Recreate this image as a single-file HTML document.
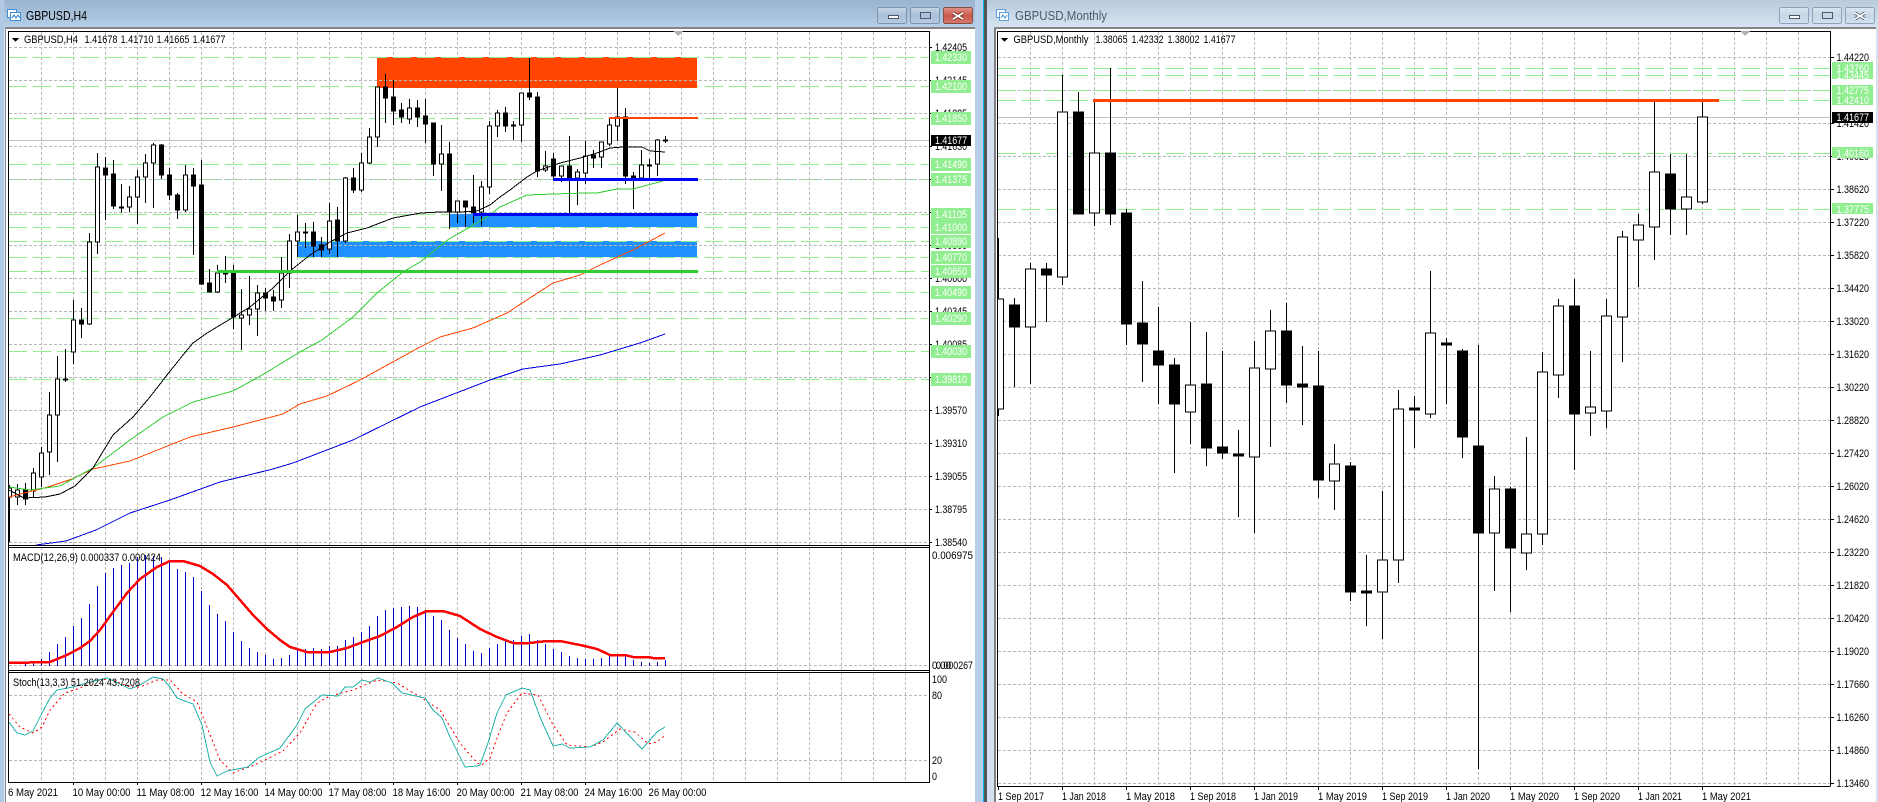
<!DOCTYPE html>
<html><head><meta charset="utf-8"><title>GBPUSD</title>
<style>
html,body{margin:0;padding:0;background:#fff;width:1878px;height:802px;overflow:hidden}
svg{display:block;shape-rendering:crispEdges}
text{font-family:"Liberation Sans",sans-serif;font-size:11px;fill:#000}
.w{fill:#fff}
</style></head><body>
<svg xmlns="http://www.w3.org/2000/svg" width="1878" height="802" viewBox="0 0 1878 802">
<defs>
<linearGradient id="tl" x1="0" y1="0" x2="0" y2="1"><stop offset="0" stop-color="#9ab3ce"/><stop offset="1" stop-color="#b6cfe7"/></linearGradient>
<linearGradient id="tr" x1="0" y1="0" x2="0" y2="1"><stop offset="0" stop-color="#b9cadb"/><stop offset="1" stop-color="#d6e4f2"/></linearGradient>
<linearGradient id="bl" x1="0" y1="0" x2="0" y2="1"><stop offset="0" stop-color="#c6d6e6"/><stop offset=".5" stop-color="#a9c0d8"/><stop offset="1" stop-color="#b9cde2"/></linearGradient>
<linearGradient id="br" x1="0" y1="0" x2="0" y2="1"><stop offset="0" stop-color="#dbe6f1"/><stop offset=".5" stop-color="#c6d6e6"/><stop offset="1" stop-color="#d3e1f0"/></linearGradient>
<linearGradient id="bc" x1="0" y1="0" x2="0" y2="1"><stop offset="0" stop-color="#e2958a"/><stop offset=".5" stop-color="#c9584b"/><stop offset="1" stop-color="#d27a6c"/></linearGradient>
<clipPath id="c1"><rect x="9" y="32" width="920" height="513"/></clipPath>
<clipPath id="c2"><rect x="998" y="32" width="832" height="754"/></clipPath>
</defs>
<rect width="1878" height="802" fill="#fff"/>
<!-- window chrome -->
<rect x="0" y="0" width="984" height="27" fill="url(#tl)"/>
<rect x="0" y="0" width="4.5" height="802" fill="#b2c9e6"/>
<rect x="5" y="27" width="1" height="775" fill="#8a8a8a"/>
<rect x="5" y="27" width="970" height="2" fill="#858585"/>
<rect x="975" y="0" width="8" height="802" fill="#b8cfe8"/>
<rect x="983" y="0" width="1" height="802" fill="#00b4f0"/>
<rect x="984" y="0" width="3" height="802" fill="#555"/>
<rect x="987" y="0" width="891" height="27" fill="url(#tr)"/>
<rect x="987" y="27" width="7" height="775" fill="#d3e1f0"/>
<rect x="994" y="27" width="2" height="775" fill="#808080"/>
<rect x="994" y="27" width="882" height="2" fill="#858585"/>
<rect x="1876" y="27" width="2" height="775" fill="#d3e1f0"/>
<!-- title icons and text -->
<g fill="#fff" stroke="#3f8fd8"><rect x="7.5" y="9.5" width="9" height="8"/><rect x="10.5" y="12.5" width="10" height="8"/></g>
<path d="M12 18l2-3 2 3 2-3 2 3" fill="none" stroke="#3f8fd8"/>
<text x="26" y="20" style="font-size:12.5px" textLength="61" lengthAdjust="spacingAndGlyphs">GBPUSD,H4</text>
<g fill="#fff" stroke="#5a9fdc"><rect x="996.5" y="9.5" width="9" height="8"/><rect x="999.5" y="12.5" width="9" height="8"/></g>
<path d="M1001 18l2-3 2 3 2-3" fill="none" stroke="#5a9fdc"/>
<text x="1015" y="20" style="font-size:12.5px;fill:#4d5a68" textLength="92" lengthAdjust="spacingAndGlyphs">GBPUSD,Monthly</text>
<!-- window buttons left -->
<g stroke="#7c93ad"><rect x="877.5" y="7.5" width="29" height="16" rx="2" fill="url(#bl)"/><rect x="910.5" y="7.5" width="29" height="16" rx="2" fill="url(#bl)"/><rect x="943.5" y="7.5" width="29" height="16" rx="2" fill="url(#bc)" stroke="#8a4a44"/></g>
<g fill="#fff" stroke="#4a5a6c"><rect x="888.5" y="15.5" width="10" height="3"/><rect x="920.5" y="12.5" width="10" height="6" fill="none"/></g>
<path d="M953 13l10 6M963 13l-10 6" stroke="#6a2a24" stroke-width="3.4" fill="none"/><path d="M953 13l10 6M963 13l-10 6" stroke="#fff" stroke-width="1.8" fill="none"/>
<!-- window buttons right -->
<g stroke="#8da2b9"><rect x="1779.5" y="7.5" width="29" height="16" rx="2" fill="url(#br)"/><rect x="1812.5" y="7.5" width="29" height="16" rx="2" fill="url(#br)"/><rect x="1845.5" y="7.5" width="29" height="16" rx="2" fill="url(#br)"/></g>
<g fill="#fff" stroke="#4a5a6c"><rect x="1789.5" y="15.5" width="10" height="3"/><rect x="1822.5" y="12.5" width="10" height="6" fill="none"/></g>
<path d="M1855 13l10 6M1865 13l-10 6" stroke="#5a6a7c" stroke-width="3.4" fill="none"/><path d="M1855 13l10 6M1865 13l-10 6" stroke="#fff" stroke-width="1.6" fill="none"/>

<!-- LEFT CHART -->
<path fill="none" stroke="#b8b8b8" stroke-dasharray="3 2" d="M41.5 32V782M73.5 32V782M105.5 32V782M137.5 32V782M169.5 32V782M201.5 32V782M233.5 32V782M265.5 32V782M297.5 32V782M329.5 32V782M361.5 32V782M393.5 32V782M425.5 32V782M457.5 32V782M489.5 32V782M521.5 32V782M553.5 32V782M585.5 32V782M617.5 32V782M649.5 32V782M681.5 32V782M713.5 32V782M745.5 32V782M777.5 32V782M809.5 32V782M841.5 32V782M873.5 32V782M905.5 32V782"/>
<path fill="none" stroke="#90ee90" stroke-dasharray="18 6" d="M9 57.5H929M9 86.5H929M9 118.5H929M9 164.5H929M9 179.5H929M9 214.5H929M9 227.5H929M9 241.5H929M9 257.5H929M9 271.5H929M9 292.5H929M9 318.5H929M9 351.5H929M9 379.5H929"/>
<g clip-path="url(#c1)">
<rect x="377" y="57" width="320" height="31" fill="#ff4500"/>
<rect x="449" y="214" width="248" height="13" fill="#1e90ff"/>
<rect x="297" y="241" width="400" height="16" fill="#1e90ff"/>
<path fill="none" stroke="#90ee90" stroke-dasharray="18 6" d="M369 57.5H697M297 241.5H697"/>
<path fill="none" stroke="#b8b8b8" stroke-dasharray="3 2" d="M9 47.5H929M9 80.5H929M9 113.5H929M9 146.5H929M9 179.5H929M9 212.5H929M9 245.5H929M9 278.5H929M9 311.5H929M9 344.5H929M9 377.5H929M9 410.5H929M9 443.5H929M9 476.5H929M9 509.5H929M9 542.5H929"/>
<path d="M9 140.5H929" stroke="#c0c0c0" fill="none"/>
<!-- wicks -->
<path fill="none" stroke="#000" d="M9.5 485V542M17.5 484V505M25.5 483V505M33.5 468V497M41.5 447V487M49.5 392V475M57.5 356V462M65.5 349V382M73.5 300V364M81.5 308V338M89.5 233V325M97.5 153V254M105.5 157V220M113.5 160V209M121.5 184V213M129.5 186V212M137.5 170V224M145.5 154V203M153.5 143V208M161.5 144V179M169.5 168V200M177.5 193V219M185.5 165V212M193.5 168V255M201.5 160V285M209.5 269V292M217.5 265V293M225.5 256V283M233.5 265V329M241.5 289V350M249.5 276V325M257.5 285V336M265.5 288V311M273.5 290V311M281.5 257V308M289.5 234V288M297.5 215V257M305.5 223V248M313.5 222V257M321.5 237V257M329.5 203V254M337.5 207V257M345.5 177V243M353.5 168V193M361.5 153V192M369.5 128V164M377.5 87V147M385.5 74V123M393.5 80V125M401.5 103V123M409.5 99V124M417.5 100V127M425.5 99V143M433.5 123V176M441.5 125V191M449.5 142V229M457.5 201V223M465.5 201V227M473.5 175V223M481.5 181V226M489.5 121V194M497.5 110V137M505.5 107V132M513.5 121V140M521.5 93V142M529.5 58V100M537.5 92V177M545.5 151V172M553.5 153V179M561.5 166V182M569.5 136V213M577.5 169V205M585.5 141V184M593.5 150V168M601.5 142V168M609.5 118V146M617.5 88V141M625.5 108V184M633.5 172V209M641.5 150V178M649.5 159V179M657.5 139V176M665.5 136V143"/>
<!-- white bodies -->
<path fill="#fff" stroke="#000" d="M7.5 488h4v9h-4zM15.5 490h4v7h-4zM31.5 473h4v18h-4zM39.5 453h4v24h-4zM47.5 415h4v37h-4zM55.5 379h4v36h-4zM71.5 320h4v32h-4zM87.5 242h4v82h-4zM95.5 167h4v75h-4zM127.5 197h4v10h-4zM135.5 177h4v20h-4zM143.5 163h4v14h-4zM151.5 145h4v18h-4zM183.5 175h4v35h-4zM215.5 273h4v19h-4zM239.5 315h4v3h-4zM247.5 309h4v6h-4zM255.5 293h4v16h-4zM279.5 273h4v27h-4zM287.5 241h4v32h-4zM295.5 232h4v9h-4zM327.5 221h4v28h-4zM343.5 178h4v63h-4zM359.5 163h4v27h-4zM367.5 137h4v26h-4zM375.5 87h4v50h-4zM407.5 108h4v11h-4zM439.5 154h4v10h-4zM455.5 201h4v11h-4zM479.5 187h4v25h-4zM487.5 126h4v61h-4zM495.5 113h4v13h-4zM519.5 93h4v32h-4zM543.5 166h4v4h-4zM559.5 166h4v10h-4zM575.5 172h4v6h-4zM583.5 156h4v17h-4zM599.5 142h4v15h-4zM607.5 125h4v19h-4zM615.5 117h4v9h-4zM639.5 165h4v13h-4zM655.5 140h4v24h-4z"/>
<!-- black bodies -->
<path fill="#000" stroke="#000" d="M23.5 490h4v9h-4zM63.5 379h4v1h-4zM79.5 320h4v4h-4zM103.5 168h4v7h-4zM111.5 174h4v32h-4zM119.5 207h4v1h-4zM159.5 145h4v30h-4zM167.5 175h4v20h-4zM175.5 195h4v15h-4zM191.5 175h4v11h-4zM199.5 185h4v99h-4zM207.5 283h4v9h-4zM223.5 273h4v1h-4zM231.5 273h4v44h-4zM263.5 293h4v5h-4zM271.5 297h4v4h-4zM303.5 232h4v1h-4zM311.5 232h4v14h-4zM319.5 245h4v5h-4zM335.5 220h4v21h-4zM351.5 178h4v12h-4zM383.5 87h4v11h-4zM391.5 97h4v14h-4zM399.5 110h4v7h-4zM415.5 108h4v9h-4zM423.5 116h4v8h-4zM431.5 123h4v41h-4zM447.5 154h4v58h-4zM463.5 201h4v6h-4zM471.5 207h4v6h-4zM503.5 113h4v13h-4zM511.5 125h4v1h-4zM527.5 93h4v4h-4zM535.5 97h4v74h-4zM551.5 159h4v17h-4zM567.5 166h4v12h-4zM591.5 155h4v3h-4zM623.5 117h4v59h-4zM631.5 176h4v2h-4zM647.5 165h4v1h-4zM663.5 140h4v1h-4z"/>
<!-- moving averages -->
<polyline fill="none" stroke="#0000e0" points="36,545 66,541 96,530 130,513 170,500 220,482 273,469 293,463 353,440 420,407 490,380 523,369 560,364 600,355 640,343 665,334"/>
<polyline fill="none" stroke="#ff4500" points="9,497 48,487 72,479 93,469 130,461 190,437 233,427 283,414 300,404 327,396 360,380 420,347 440,337 473,328 507,313 533,296 553,283 580,275 600,265 633,250 665,233"/>
<polyline fill="none" stroke="#32cd32" points="9,487 30,490 60,486 93,468 130,440 163,417 193,402 233,391 257,378 300,352 322,340 353,317 377,293 403,272 420,262 449,239 465,230 487,217 500,207 527,195 553,194 587,193 597,193 617,189 633,189 663,181"/>
<polyline fill="none" stroke="#000" points="9,490 24,498 45,497 60,494 75,486 93,468 113,435 133,417 150,397 167,375 183,355 193,343 207,333 227,321 250,307 273,288 290,271 310,255 330,242 347,233 367,228 393,218 421,213 440,212 460,212 477,211 490,205 500,197 510,190 527,177 537,171 560,163 580,158 597,153 610,148 623,147 642,147 650,151 665,152"/>
<!-- object lines -->
<rect x="473" y="213" width="225" height="3" fill="#0000ff"/>
<rect x="553" y="178" width="145" height="3" fill="#0000ff"/>
<rect x="217" y="270" width="481" height="3" fill="#32cd32"/>
<rect x="609" y="117" width="89" height="2" fill="#ff4500"/>
</g>
<!-- MACD -->
<path fill="none" stroke="#b8b8b8" stroke-dasharray="3 2" d="M9 665.5H929M9 695.5H929M9 760.5H929"/>
<path fill="none" stroke="#0000d0" d="M25.5 666V664M33.5 666V662M41.5 666V659M49.5 666V652M57.5 666V644M65.5 666V637M73.5 666V626M81.5 666V618M89.5 666V604M97.5 666V586M105.5 666V573M113.5 666V568M121.5 666V565M129.5 666V563M137.5 666V557M145.5 666V555M153.5 666V556M161.5 666V557M169.5 666V562M177.5 666V569M185.5 666V572M193.5 666V577M201.5 666V591M209.5 666V605M217.5 666V614M225.5 666V621M233.5 666V632M241.5 666V641M249.5 666V648M257.5 666V652M265.5 666V655M273.5 666V659M281.5 666V658M289.5 666V655M297.5 666V650M305.5 666V649M313.5 666V648M321.5 666V649M329.5 666V646M337.5 666V646M345.5 666V640M353.5 666V637M361.5 666V632M369.5 666V626M377.5 666V616M385.5 666V610M393.5 666V608M401.5 666V607M409.5 666V606M417.5 666V607M425.5 666V610M433.5 666V616M441.5 666V620M449.5 666V630M457.5 666V638M465.5 666V644M473.5 666V651M481.5 666V653M489.5 666V648M497.5 666V644M505.5 666V641M513.5 666V640M521.5 666V636M529.5 666V634M537.5 666V640M545.5 666V644M553.5 666V649M561.5 666V652M569.5 666V656M577.5 666V658M585.5 666V659M593.5 666V659M601.5 666V658M609.5 666V655M617.5 666V655M625.5 666V656M633.5 666V660M641.5 666V662M649.5 666V663M657.5 666V662M665.5 666V660"/>
<polyline fill="none" stroke="#ff0000" stroke-width="2.5" points="9,663 50,662 67,655 80,648 90,641 100,630 113,612 127,593 140,579 157,567 170,561 183,561 200,566 213,574 227,585 240,600 253,615 267,629 280,640 290,647 307,652 330,652 347,648 363,642 380,636 397,627 413,617 427,611 443,611 460,616 480,629 497,637 513,643 530,643 547,641 560,641 580,645 597,649 610,655 625,655 633,657 648,657 653,658 665,658"/>
<!-- Stoch -->
<polyline fill="none" stroke="#ff0000" stroke-dasharray="2 3" points="9,714 20,727 33,733 42,727 50,710 65,693 80,688 97,680 110,679 130,687 140,687 157,680 170,680 183,694 197,702 207,727 220,760 233,773 257,764 283,751 300,733 317,703 330,696 353,690 377,680 397,683 420,697 440,710 460,743 477,763 482,765 490,758 500,730 507,713 522,693 538,695 552,723 567,745 590,747 603,742 620,729 635,732 648,744 657,742 664,736"/>
<polyline fill="none" stroke="#20b2aa" points="9,722 17,733 25,735 33,731 42,713 50,698 57,690 73,687 90,682 107,678 120,684 130,689 140,685 153,677 163,679 170,687 177,698 193,704 202,725 210,762 217,776 227,771 248,767 258,758 280,748 297,725 305,709 322,695 338,696 345,687 353,687 362,680 370,682 378,678 392,683 402,693 425,698 433,710 442,718 450,737 465,767 477,766 480,765 488,743 497,713 506,695 522,688 530,690 540,717 553,746 562,744 570,748 590,747 603,740 617,723 642,749 657,732 665,727"/>
<!-- left frame -->
<path fill="none" stroke="#000" d="M8.5 31.5H929.5V782.5H8.5ZM9 545.5H929M9 547.5H929M9 670.5H929M9 672.5H929M73.5 782V785M137.5 782V785M201.5 782V785M265.5 782V785M329.5 782V785M393.5 782V785M457.5 782V785M521.5 782V785M585.5 782V785M649.5 782V785M929 47.5H932M929 80.5H932M929 113.5H932M929 146.5H932M929 179.5H932M929 212.5H932M929 245.5H932M929 278.5H932M929 311.5H932M929 344.5H932M929 377.5H932M929 410.5H932M929 443.5H932M929 476.5H932M929 509.5H932M929 542.5H932"/>
<path d="M678 36l-5-5h10z" fill="#b0b0b0"/>
<path d="M12 38h7l-3.5 4z" fill="#000"/>
<text x="24" y="43" textLength="54" lengthAdjust="spacingAndGlyphs">GBPUSD,H4</text>
<text x="84.5" y="43" textLength="33" lengthAdjust="spacingAndGlyphs">1.41678</text>
<text x="120.5" y="43" textLength="33" lengthAdjust="spacingAndGlyphs">1.41710</text>
<text x="156.5" y="43" textLength="33" lengthAdjust="spacingAndGlyphs">1.41665</text>
<text x="192.5" y="43" textLength="33" lengthAdjust="spacingAndGlyphs">1.41677</text>
<text x="13" y="561" textLength="148" lengthAdjust="spacingAndGlyphs">MACD(12,26,9) 0.000337 0.000424</text>
<text x="13" y="686" textLength="127" lengthAdjust="spacingAndGlyphs">Stoch(13,3,3) 51.2024 43.7208</text>
<!-- left time axis -->
<text x="8" y="796" textLength="50" lengthAdjust="spacingAndGlyphs">6 May 2021</text>
<text x="72.5" y="796" textLength="58" lengthAdjust="spacingAndGlyphs">10 May 00:00</text>
<text x="136.5" y="796" textLength="58" lengthAdjust="spacingAndGlyphs">11 May 08:00</text>
<text x="200.5" y="796" textLength="58" lengthAdjust="spacingAndGlyphs">12 May 16:00</text>
<text x="264.5" y="796" textLength="58" lengthAdjust="spacingAndGlyphs">14 May 00:00</text>
<text x="328.5" y="796" textLength="58" lengthAdjust="spacingAndGlyphs">17 May 08:00</text>
<text x="392.5" y="796" textLength="58" lengthAdjust="spacingAndGlyphs">18 May 16:00</text>
<text x="456.5" y="796" textLength="58" lengthAdjust="spacingAndGlyphs">20 May 00:00</text>
<text x="520.5" y="796" textLength="58" lengthAdjust="spacingAndGlyphs">21 May 08:00</text>
<text x="584.5" y="796" textLength="58" lengthAdjust="spacingAndGlyphs">24 May 16:00</text>
<text x="648.5" y="796" textLength="58" lengthAdjust="spacingAndGlyphs">26 May 00:00</text>
<!-- left price axis -->
<text x="935" y="51" textLength="32" lengthAdjust="spacingAndGlyphs">1.42405</text>
<text x="935" y="84" textLength="32" lengthAdjust="spacingAndGlyphs">1.42145</text>
<text x="935" y="117" textLength="32" lengthAdjust="spacingAndGlyphs">1.41885</text>
<text x="935" y="150" textLength="32" lengthAdjust="spacingAndGlyphs">1.41630</text>
<text x="935" y="183" textLength="32" lengthAdjust="spacingAndGlyphs">1.41370</text>
<text x="935" y="216" textLength="32" lengthAdjust="spacingAndGlyphs">1.41115</text>
<text x="935" y="249" textLength="32" lengthAdjust="spacingAndGlyphs">1.40860</text>
<text x="935" y="282" textLength="32" lengthAdjust="spacingAndGlyphs">1.40600</text>
<text x="935" y="315" textLength="32" lengthAdjust="spacingAndGlyphs">1.40345</text>
<text x="935" y="348" textLength="32" lengthAdjust="spacingAndGlyphs">1.40085</text>
<text x="935" y="381" textLength="32" lengthAdjust="spacingAndGlyphs">1.39825</text>
<text x="935" y="414" textLength="32" lengthAdjust="spacingAndGlyphs">1.39570</text>
<text x="935" y="447" textLength="32" lengthAdjust="spacingAndGlyphs">1.39310</text>
<text x="935" y="480" textLength="32" lengthAdjust="spacingAndGlyphs">1.39055</text>
<text x="935" y="513" textLength="32" lengthAdjust="spacingAndGlyphs">1.38795</text>
<text x="935" y="546" textLength="32" lengthAdjust="spacingAndGlyphs">1.38540</text>
<g fill="#90ee90"><rect x="931" y="51" width="40" height="13"/><rect x="931" y="80" width="40" height="13"/><rect x="931" y="112" width="40" height="13"/><rect x="931" y="158" width="40" height="13"/><rect x="931" y="173" width="40" height="13"/><rect x="931" y="208" width="40" height="13"/><rect x="931" y="221" width="40" height="13"/><rect x="931" y="235" width="40" height="13"/><rect x="931" y="251" width="40" height="13"/><rect x="931" y="265" width="40" height="13"/><rect x="931" y="286" width="40" height="13"/><rect x="931" y="312" width="40" height="13"/><rect x="931" y="345" width="40" height="13"/><rect x="931" y="373" width="40" height="13"/></g>
<rect x="931" y="135" width="40" height="11" fill="#000"/>
<text class="w" x="935" y="61" textLength="32" lengthAdjust="spacingAndGlyphs">1.42330</text>
<text class="w" x="935" y="90" textLength="32" lengthAdjust="spacingAndGlyphs">1.42100</text>
<text class="w" x="935" y="122" textLength="32" lengthAdjust="spacingAndGlyphs">1.41850</text>
<text class="w" x="935" y="144" textLength="32" lengthAdjust="spacingAndGlyphs">1.41677</text>
<text class="w" x="935" y="168" textLength="32" lengthAdjust="spacingAndGlyphs">1.41490</text>
<text class="w" x="935" y="183" textLength="32" lengthAdjust="spacingAndGlyphs">1.41375</text>
<text class="w" x="935" y="218" textLength="32" lengthAdjust="spacingAndGlyphs">1.41105</text>
<text class="w" x="935" y="231" textLength="32" lengthAdjust="spacingAndGlyphs">1.41000</text>
<text class="w" x="935" y="245" textLength="32" lengthAdjust="spacingAndGlyphs">1.40890</text>
<text class="w" x="935" y="261" textLength="32" lengthAdjust="spacingAndGlyphs">1.40770</text>
<text class="w" x="935" y="275" textLength="32" lengthAdjust="spacingAndGlyphs">1.40650</text>
<text class="w" x="935" y="296" textLength="32" lengthAdjust="spacingAndGlyphs">1.40490</text>
<text class="w" x="935" y="322" textLength="32" lengthAdjust="spacingAndGlyphs">1.40290</text>
<text class="w" x="935" y="355" textLength="32" lengthAdjust="spacingAndGlyphs">1.40030</text>
<text class="w" x="935" y="383" textLength="32" lengthAdjust="spacingAndGlyphs">1.39810</text>
<text x="932" y="559" textLength="41" lengthAdjust="spacingAndGlyphs">0.006975</text>
<text x="932" y="669" textLength="19" lengthAdjust="spacingAndGlyphs">0.00</text>
<text x="936" y="669" textLength="37" lengthAdjust="spacingAndGlyphs">0.000267</text>
<text x="932" y="683" textLength="15" lengthAdjust="spacingAndGlyphs">100</text>
<text x="932" y="699" textLength="10" lengthAdjust="spacingAndGlyphs">80</text>
<text x="932" y="764" textLength="10" lengthAdjust="spacingAndGlyphs">20</text>
<text x="932" y="780" textLength="5" lengthAdjust="spacingAndGlyphs">0</text>

<!-- RIGHT CHART -->
<path fill="none" stroke="#b8b8b8" stroke-dasharray="3 2" d="M1030.5 32V786M1062.5 32V786M1094.5 32V786M1126.5 32V786M1158.5 32V786M1190.5 32V786M1222.5 32V786M1254.5 32V786M1286.5 32V786M1318.5 32V786M1350.5 32V786M1382.5 32V786M1414.5 32V786M1446.5 32V786M1478.5 32V786M1510.5 32V786M1542.5 32V786M1574.5 32V786M1606.5 32V786M1638.5 32V786M1670.5 32V786M1702.5 32V786M1734.5 32V786M1766.5 32V786M1798.5 32V786M998 57.5H1830M998 90.5H1830M998 123.5H1830M998 156.5H1830M998 189.5H1830M998 222.5H1830M998 255.5H1830M998 288.5H1830M998 321.5H1830M998 354.5H1830M998 387.5H1830M998 420.5H1830M998 453.5H1830M998 486.5H1830M998 519.5H1830M998 552.5H1830M998 585.5H1830M998 618.5H1830M998 651.5H1830M998 684.5H1830M998 717.5H1830M998 750.5H1830M998 783.5H1830"/>
<path fill="none" stroke="#90ee90" stroke-dasharray="18 6" d="M998 68.5H1830M998 75.5H1830M998 90.5H1830M998 100.5H1830M998 153.5H1830M998 209.5H1830"/>
<path d="M998 117.5H1830" stroke="#c0c0c0" fill="none"/>
<g clip-path="url(#c2)">
<path fill="none" stroke="#000" d="M998.5 238V416M1014.5 298V387M1030.5 263V384M1046.5 263V322M1062.5 75V285M1078.5 92V214M1094.5 100V226M1110.5 68V225M1126.5 209V345M1142.5 281V382M1158.5 307V404M1174.5 358V473M1190.5 322V444M1206.5 332V466M1222.5 351V459M1238.5 430V517M1254.5 341V533M1270.5 310V447M1286.5 303V403M1302.5 346V425M1318.5 351V498M1334.5 444V510M1350.5 462V601M1366.5 555V626M1382.5 491V639M1398.5 390V583M1414.5 396V448M1430.5 271V418M1446.5 338V404M1462.5 349V458M1478.5 345V769M1494.5 476V591M1510.5 487V612M1526.5 437V570M1542.5 352V545M1558.5 299V398M1574.5 279V470M1590.5 351V436M1606.5 299V428M1622.5 231V362M1638.5 214V287M1654.5 100V260M1670.5 154V235M1686.5 154V235M1702.5 101V204"/>
<path fill="#fff" stroke="#000" d="M993.5 299h10v110h-10zM1025.5 269h10v58h-10zM1057.5 112h10v165h-10zM1089.5 153h10v60h-10zM1185.5 385h10v27h-10zM1249.5 368h10v89h-10zM1265.5 331h10v38h-10zM1329.5 464h10v17h-10zM1377.5 560h10v32h-10zM1393.5 409h10v151h-10zM1425.5 333h10v81h-10zM1489.5 489h10v44h-10zM1521.5 534h10v19h-10zM1537.5 372h10v162h-10zM1553.5 306h10v69h-10zM1585.5 407h10v6h-10zM1601.5 316h10v95h-10zM1617.5 237h10v80h-10zM1633.5 225h10v15h-10zM1649.5 172h10v55h-10zM1681.5 197h10v12h-10zM1697.5 117h10v85h-10z"/>
<path fill="#000" stroke="#000" d="M1009.5 305h10v22h-10zM1041.5 269h10v6h-10zM1073.5 112h10v102h-10zM1105.5 153h10v61h-10zM1121.5 213h10v111h-10zM1137.5 323h10v21h-10zM1153.5 351h10v14h-10zM1169.5 365h10v39h-10zM1201.5 384h10v64h-10zM1217.5 447h10v6h-10zM1233.5 454h10v2h-10zM1281.5 331h10v54h-10zM1297.5 384h10v3h-10zM1313.5 386h10v94h-10zM1345.5 466h10v126h-10zM1361.5 591h10v2h-10zM1409.5 408h10v2h-10zM1441.5 343h10v2h-10zM1457.5 351h10v86h-10zM1473.5 446h10v87h-10zM1505.5 489h10v59h-10zM1569.5 306h10v108h-10zM1665.5 174h10v35h-10z"/>
<rect x="1093" y="99" width="626" height="3" fill="#ff4500"/>
</g>
<path fill="none" stroke="#000" d="M997.5 31.5H1830.5V786M997.5 31.5V786.5H1830.5M998.5 787V790M1062.5 787V790M1126.5 787V790M1190.5 787V790M1254.5 787V790M1318.5 787V790M1382.5 787V790M1446.5 787V790M1510.5 787V790M1574.5 787V790M1638.5 787V790M1702.5 787V790M1831 57.5H1834M1831 123.5H1834M1831 156.5H1834M1831 189.5H1834M1831 222.5H1834M1831 255.5H1834M1831 288.5H1834M1831 321.5H1834M1831 354.5H1834M1831 387.5H1834M1831 420.5H1834M1831 453.5H1834M1831 486.5H1834M1831 519.5H1834M1831 552.5H1834M1831 585.5H1834M1831 618.5H1834M1831 651.5H1834M1831 684.5H1834M1831 717.5H1834M1831 750.5H1834M1831 783.5H1834"/>
<path d="M1745 36l-5-5h10z" fill="#b0b0b0"/>
<path d="M1001 38h7l-3.5 4z" fill="#000"/>
<text x="1013.5" y="43" textLength="75" lengthAdjust="spacingAndGlyphs">GBPUSD,Monthly</text>
<text x="1095.5" y="43" textLength="32" lengthAdjust="spacingAndGlyphs">1.38065</text>
<text x="1131.5" y="43" textLength="32" lengthAdjust="spacingAndGlyphs">1.42332</text>
<text x="1167.5" y="43" textLength="32" lengthAdjust="spacingAndGlyphs">1.38002</text>
<text x="1203.5" y="43" textLength="32" lengthAdjust="spacingAndGlyphs">1.41677</text>
<!-- right time axis -->
<text x="998" y="800" textLength="46" lengthAdjust="spacingAndGlyphs">1 Sep 2017</text>
<text x="1062" y="800" textLength="44" lengthAdjust="spacingAndGlyphs">1 Jan 2018</text>
<text x="1126" y="800" textLength="49" lengthAdjust="spacingAndGlyphs">1 May 2018</text>
<text x="1190" y="800" textLength="46" lengthAdjust="spacingAndGlyphs">1 Sep 2018</text>
<text x="1254" y="800" textLength="44" lengthAdjust="spacingAndGlyphs">1 Jan 2019</text>
<text x="1318" y="800" textLength="49" lengthAdjust="spacingAndGlyphs">1 May 2019</text>
<text x="1382" y="800" textLength="46" lengthAdjust="spacingAndGlyphs">1 Sep 2019</text>
<text x="1446" y="800" textLength="44" lengthAdjust="spacingAndGlyphs">1 Jan 2020</text>
<text x="1510" y="800" textLength="49" lengthAdjust="spacingAndGlyphs">1 May 2020</text>
<text x="1574" y="800" textLength="46" lengthAdjust="spacingAndGlyphs">1 Sep 2020</text>
<text x="1638" y="800" textLength="44" lengthAdjust="spacingAndGlyphs">1 Jan 2021</text>
<text x="1702" y="800" textLength="49" lengthAdjust="spacingAndGlyphs">1 May 2021</text>
<!-- right price axis -->
<text x="1836.5" y="61" textLength="32.5" lengthAdjust="spacingAndGlyphs">1.44220</text>
<text x="1836.5" y="94" textLength="32.5" lengthAdjust="spacingAndGlyphs">1.42820</text>
<text x="1836.5" y="127" textLength="32.5" lengthAdjust="spacingAndGlyphs">1.41420</text>
<text x="1836.5" y="160" textLength="32.5" lengthAdjust="spacingAndGlyphs">1.40020</text>
<text x="1836.5" y="193" textLength="32.5" lengthAdjust="spacingAndGlyphs">1.38620</text>
<text x="1836.5" y="226" textLength="32.5" lengthAdjust="spacingAndGlyphs">1.37220</text>
<text x="1836.5" y="259" textLength="32.5" lengthAdjust="spacingAndGlyphs">1.35820</text>
<text x="1836.5" y="292" textLength="32.5" lengthAdjust="spacingAndGlyphs">1.34420</text>
<text x="1836.5" y="325" textLength="32.5" lengthAdjust="spacingAndGlyphs">1.33020</text>
<text x="1836.5" y="358" textLength="32.5" lengthAdjust="spacingAndGlyphs">1.31620</text>
<text x="1836.5" y="391" textLength="32.5" lengthAdjust="spacingAndGlyphs">1.30220</text>
<text x="1836.5" y="424" textLength="32.5" lengthAdjust="spacingAndGlyphs">1.28820</text>
<text x="1836.5" y="457" textLength="32.5" lengthAdjust="spacingAndGlyphs">1.27420</text>
<text x="1836.5" y="490" textLength="32.5" lengthAdjust="spacingAndGlyphs">1.26020</text>
<text x="1836.5" y="523" textLength="32.5" lengthAdjust="spacingAndGlyphs">1.24620</text>
<text x="1836.5" y="556" textLength="32.5" lengthAdjust="spacingAndGlyphs">1.23220</text>
<text x="1836.5" y="589" textLength="32.5" lengthAdjust="spacingAndGlyphs">1.21820</text>
<text x="1836.5" y="622" textLength="32.5" lengthAdjust="spacingAndGlyphs">1.20420</text>
<text x="1836.5" y="655" textLength="32.5" lengthAdjust="spacingAndGlyphs">1.19020</text>
<text x="1836.5" y="688" textLength="32.5" lengthAdjust="spacingAndGlyphs">1.17660</text>
<text x="1836.5" y="721" textLength="32.5" lengthAdjust="spacingAndGlyphs">1.16260</text>
<text x="1836.5" y="754" textLength="32.5" lengthAdjust="spacingAndGlyphs">1.14860</text>
<text x="1836.5" y="787" textLength="32.5" lengthAdjust="spacingAndGlyphs">1.13460</text>
<g fill="#90ee90"><rect x="1832" y="62" width="41" height="17"/><rect x="1832" y="85" width="41" height="20"/><rect x="1832" y="147" width="41" height="11"/><rect x="1832" y="203" width="41" height="11"/></g>
<rect x="1832" y="112" width="41" height="11" fill="#000"/>
<text class="w" x="1836.5" y="79" textLength="32.5" lengthAdjust="spacingAndGlyphs">1.43445</text>
<text class="w" x="1836.5" y="72" textLength="32.5" lengthAdjust="spacingAndGlyphs">1.43760</text>
<text class="w" x="1836.5" y="94" textLength="32.5" lengthAdjust="spacingAndGlyphs">1.42775</text>
<text class="w" x="1836.5" y="104" textLength="32.5" lengthAdjust="spacingAndGlyphs">1.42410</text>
<text class="w" x="1836.5" y="121" textLength="32.5" lengthAdjust="spacingAndGlyphs">1.41677</text>
<text class="w" x="1836.5" y="157" textLength="32.5" lengthAdjust="spacingAndGlyphs">1.40160</text>
<text class="w" x="1836.5" y="213" textLength="32.5" lengthAdjust="spacingAndGlyphs">1.37775</text>
</svg>
</body></html>
